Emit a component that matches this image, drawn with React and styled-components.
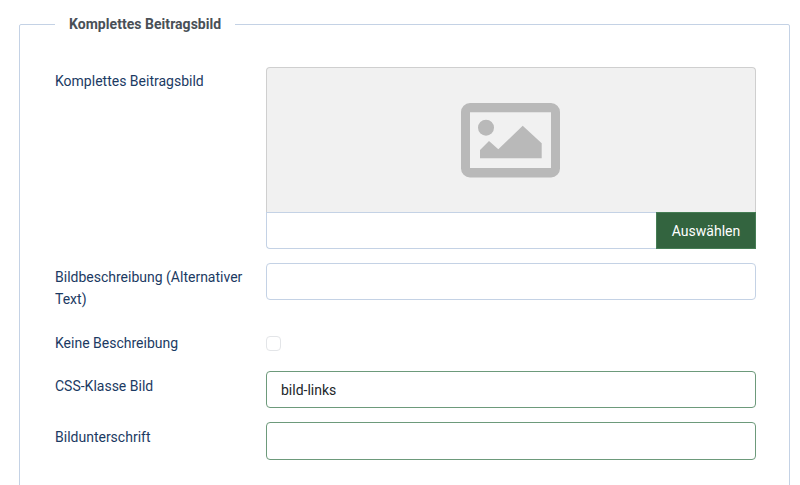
import React from "react";
import styled, { createGlobalStyle } from "styled-components";

const GlobalStyle = createGlobalStyle`
  html, body {
    margin: 0;
    padding: 0;
    background: #fff;
    overflow: hidden;
  }
  body {
    font-family: Roboto, "Liberation Sans", sans-serif;
    font-size: 14px;
  }
`;

const Page = styled.div`
  width: 800px;
  height: 485px;
  overflow: hidden;
  padding: 16px 10px 0 19px;
  box-sizing: border-box;
`;

const Group = styled.fieldset`
  margin: 0;
  padding: 0 33px 40px 35px;
  border: 1px solid #c4d2e5;
  border-radius: 2px;
  min-width: 0;
`;

const Legend = styled.legend`
  padding: 0 14px;
  font-size: 14px;
  font-weight: 700;
  line-height: 16px;
  letter-spacing: 0.04px;
  color: #495057;
`;

const Row = styled.div`
  display: grid;
  grid-template-columns: 211px 490px;
  margin-top: ${(p) => p.$gap}px;
`;

const Label = styled.label`
  font-size: 14px;
  line-height: 22px;
  color: #1b3a63;
  padding-top: ${(p) => p.$top || 0}px;
`;

const Media = styled.div`
  display: flex;
  flex-direction: column;
`;

const Preview = styled.div`
  height: 144px;
  padding-right: 2px;
  display: flex;
  align-items: center;
  justify-content: center;
  background: #f1f1f1;
  border: 1px solid #cfcfcf;
  border-bottom: 0;
  border-radius: 4px 4px 0 0;
`;

const PickerRow = styled.div`
  display: flex;
  height: 37px;
`;

const PickerInput = styled.input`
  flex: 1;
  min-width: 0;
  box-sizing: border-box;
  border: 1px solid #c4d2e5;
  border-right: 0;
  border-radius: 0 0 0 4px;
  background: #fff;
  outline: none;
`;

const PickButton = styled.button`
  width: 100px;
  border: 1px solid #457d54;
  border-radius: 0;
  background: #33643f;
  color: #fff;
  font-family: inherit;
  font-size: 14px;
  padding: 0;
`;

const TextField = styled.input`
  width: 100%;
  height: ${(p) => p.$h || 37}px;
  box-sizing: border-box;
  padding: 0 14px;
  border: 1px solid ${(p) => (p.$valid ? "#6d9a7b" : "#c4d2e5")};
  border-radius: 4px;
  background: #fff;
  color: #22262a;
  font-family: inherit;
  font-size: 14px;
  outline: none;
`;

const Check = styled.input`
  appearance: none;
  display: block;
  width: 15px;
  height: 15px;
  margin: 4px 0 0;
  border: 1px solid #e3e5e8;
  border-radius: 4px;
  background: #fff;
`;

const ImageIcon = () => (
  <svg width="99" height="75" viewBox="0 0 99 75">
    <path
      fill="#b9b9b9"
      fillRule="evenodd"
      d="M9 0H90A9 9 0 0 1 99 9V65.5A9 9 0 0 1 90 74.5H9A9 9 0 0 1 0 65.5V9A9 9 0 0 1 9 0ZM9 9.3V65H90V9.3Z"
    />
    <circle cx="25" cy="24.7" r="8" fill="#b9b9b9" />
    <path fill="#b9b9b9" d="M19 55.3V47L28 38L37.3 46.3L61.7 22.7L80.7 40.3V55.3Z" />
  </svg>
);

export default function App() {
  return (
    <>
      <GlobalStyle />
      <Page>
        <Group>
          <Legend>Komplettes Beitragsbild</Legend>
          <Row $gap={35}>
            <Label $top={3}>Komplettes Beitragsbild</Label>
            <Media>
              <Preview>
                <ImageIcon />
              </Preview>
              <PickerRow>
                <PickerInput readOnly />
                <PickButton type="button">Auswählen</PickButton>
              </PickerRow>
            </Media>
          </Row>
          <Row $gap={14}>
            <Label $top={3}>Bildbeschreibung (Alternativer Text)</Label>
            <TextField />
          </Row>
          <Row $gap={22}>
            <Label>Keine Beschreibung</Label>
            <Check type="checkbox" />
          </Row>
          <Row $gap={17}>
            <Label $top={4}>CSS-Klasse Bild</Label>
            <TextField $valid defaultValue="bild-links" />
          </Row>
          <Row $gap={14}>
            <Label $top={4}>Bildunterschrift</Label>
            <TextField $valid $h={38} />
          </Row>
        </Group>
      </Page>
    </>
  );
}
